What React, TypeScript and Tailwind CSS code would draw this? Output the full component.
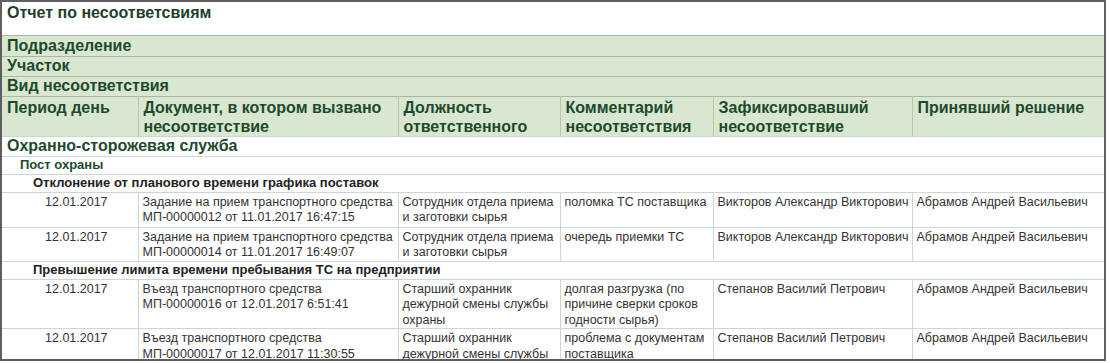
import React from 'react';

type Row = {
  date: string;
  doc: string[];
  pos: string[];
  comment: string[];
  fixed: string;
  decided: string;
  h: string;
};

const groups: { title: string; rows: Row[] }[] = [
  {
    title: 'Отклонение от планового времени графика поставок',
    rows: [
      {
        date: '12.01.2017',
        doc: ['Задание на прием транспортного средства', 'МП-00000012 от 11.01.2017 16:47:15'],
        pos: ['Сотрудник отдела приема', 'и заготовки сырья'],
        comment: ['поломка ТС поставщика'],
        fixed: 'Викторов Александр Викторович',
        decided: 'Абрамов Андрей Васильевич',
        h: 'h-[35px]',
      },
      {
        date: '12.01.2017',
        doc: ['Задание на прием транспортного средства', 'МП-00000014 от 11.01.2017 16:49:07'],
        pos: ['Сотрудник отдела приема', 'и заготовки сырья'],
        comment: ['очередь приемки ТС'],
        fixed: 'Викторов Александр Викторович',
        decided: 'Абрамов Андрей Васильевич',
        h: 'h-[34px]',
      },
    ],
  },
  {
    title: 'Превышение лимита времени пребывания ТС на предприятии',
    rows: [
      {
        date: '12.01.2017',
        doc: ['Въезд транспортного средства', 'МП-00000016 от 12.01.2017 6:51:41'],
        pos: ['Старший охранник', 'дежурной смены службы', 'охраны'],
        comment: ['долгая разгрузка (по', 'причине сверки сроков', 'годности сырья)'],
        fixed: 'Степанов Василий Петрович',
        decided: 'Абрамов Андрей Васильевич',
        h: 'h-[46px]',
      },
      {
        date: '12.01.2017',
        doc: ['Въезд транспортного средства', 'МП-00000017 от 12.01.2017 11:30:55'],
        pos: ['Старший охранник', 'дежурной смены службы', 'охраны'],
        comment: ['проблема с документам', 'поставщика'],
        fixed: 'Степанов Василий Петрович',
        decided: 'Абрамов Андрей Васильевич',
        h: 'h-[46px]',
      },
    ],
  },
];

const headCell = 'border-l border-[#b7c6ae] px-[5px] align-top pt-[1px] first:border-l-0';
const dataCell = 'border-l border-[#c9d8d3] px-[4px] align-top pt-[2px] whitespace-nowrap overflow-hidden first:border-l-0';

const Lines = ({ items }: { items: string[] }) => (
  <>
    {items.map((t, i) => (
      <div key={i}>{t}</div>
    ))}
  </>
);

export default function App() {
  return (
    <div className="w-[1110px] h-[363px] bg-white" style={{ fontFamily: '"Liberation Sans", Arial, sans-serif' }}>
      <div className="w-[1106px] h-[361px] border-2 border-[#5f5f5f] overflow-hidden">
        <table className="table-fixed border-collapse w-[1102px]">
          <colgroup>
            <col className="w-[136px]" />
            <col className="w-[260px]" />
            <col className="w-[162px]" />
            <col className="w-[153px]" />
            <col className="w-[199px]" />
            <col className="w-[192px]" />
          </colgroup>
          <tbody>
            <tr className="h-[33px]">
              <td colSpan={6} className="px-[5px] pt-[1px] align-top text-[16px] leading-[19px] font-bold text-[#1c3f2a]">
                Отчет по несоответсвиям
              </td>
            </tr>
            {['Подразделение', 'Участок', 'Вид несоответствия'].map((t, i) => (
              <tr key={t} className={`bg-[#d9e6d0] border-t border-[#a9b8a2] ${i === 0 ? 'h-[21px]' : 'h-[20px]'}`}>
                <td colSpan={6} className="px-[5px] text-[16px] leading-[18px] font-bold text-[#1d4a2c] align-middle">
                  {t}
                </td>
              </tr>
            ))}
            <tr className="bg-[#d9e6d0] border-t border-[#a9b8a2] h-[40px] text-[16px] leading-[19px] font-bold text-[#1d4a2c]">
              <td className={headCell}>Период день</td>
              <td className={headCell}>Документ, в котором вызвано несоответствие</td>
              <td className={headCell}>Должность ответственного</td>
              <td className={headCell}>Комментарий несоответствия</td>
              <td className={headCell}>Зафиксировавший несоответствие</td>
              <td className={headCell}>Принявший решение</td>
            </tr>
            <tr className="h-[20px] border-t border-[#c9d8d3]">
              <td colSpan={6} className="px-[5px] text-[16px] leading-[18px] font-bold text-[#1d4a2c]">
                Охранно-сторожевая служба
              </td>
            </tr>
            <tr className="h-[18px] border-t border-[#c9d8d3]">
              <td colSpan={6} className="pl-[18px] text-[13px] leading-[16px] font-bold text-[#1d4a2c]">
                Пост охраны
              </td>
            </tr>
            {groups.map(g => (
              <React.Fragment key={g.title}>
                <tr className="h-[18px] border-t border-[#c9d8d3]">
                  <td colSpan={6} className="pl-[31px] text-[13px] leading-[16px] font-bold text-[#222]">
                    {g.title}
                  </td>
                </tr>
                {g.rows.map((r, i) => (
                  <tr key={i} className={`${r.h} border-t border-[#c9d8d3] text-[12.5px] leading-[15.5px] text-[#333]`}>
                    <td className={`${dataCell} pl-[43px]`}>{r.date}</td>
                    <td className={dataCell}><Lines items={r.doc} /></td>
                    <td className={dataCell}><Lines items={r.pos} /></td>
                    <td className={dataCell}><Lines items={r.comment} /></td>
                    <td className={dataCell}>{r.fixed}</td>
                    <td className={dataCell}>{r.decided}</td>
                  </tr>
                ))}
              </React.Fragment>
            ))}
          </tbody>
        </table>
      </div>
    </div>
  );
}
